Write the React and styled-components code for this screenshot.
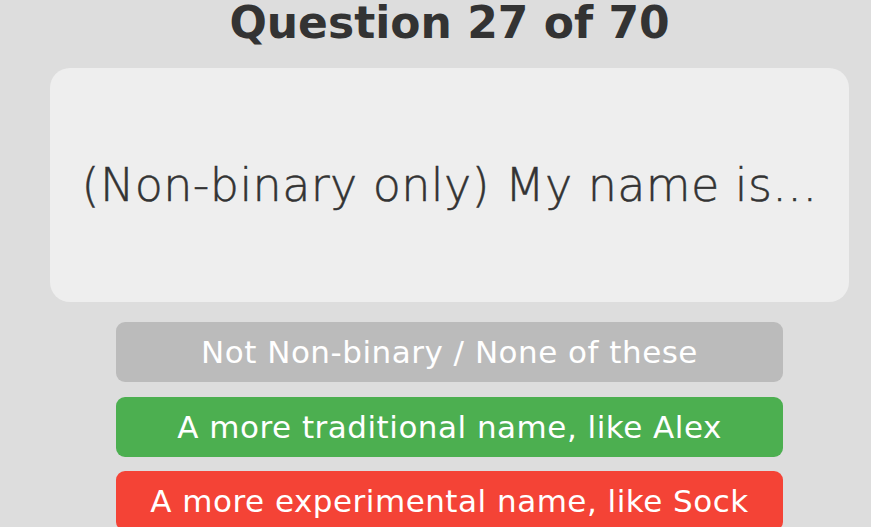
import React from 'react';
import styled, { createGlobalStyle } from 'styled-components';

const GlobalStyle = createGlobalStyle`
  html, body {
    margin: 0;
    padding: 0;
    background-color: #dddddd;
    font-family: "DejaVu Sans", Inter, sans-serif;
    overflow: hidden;
  }
`;

const Page = styled.div`
  width: 799px;
  margin-left: 50px;
  display: flex;
  flex-direction: column;
  align-items: center;
`;

const Title = styled.h1`
  margin: 0 0 14px;
  height: 54px;
  line-height: 46px;
  font-size: 44px;
  font-weight: 700;
  color: #333;
  text-align: center;
`;

const Card = styled.div`
  box-sizing: border-box;
  width: 100%;
  height: 234px;
  background-color: #eeeeee;
  border-radius: 20px;
  display: flex;
  align-items: center;
  justify-content: center;
  margin-bottom: 20px;
`;

const Prompt = styled.p`
  margin: 0;
  font-size: 46px;
  font-weight: 200;
  letter-spacing: 0.4px;
  color: #333;
  -webkit-text-stroke: 0.5px #333;
`;

const Answers = styled.div`
  width: 667px;
  display: flex;
  flex-direction: column;
  gap: 14.5px;
`;

const Answer = styled.button`
  height: 60px;
  border: none;
  border-radius: 9px;
  background-color: ${(p) => p.$color};
  color: #fff;
  font-family: inherit;
  font-size: 31px;
  font-weight: 400;
  letter-spacing: 0.5px;
  cursor: pointer;
`;

const answers = [
  { label: 'Not Non-binary / None of these', color: '#bbbbbb' },
  { label: 'A more traditional name, like Alex', color: '#4caf50' },
  { label: 'A more experimental name, like Sock', color: '#f44336' },
];

export default function App() {
  return (
    <>
      <GlobalStyle />
      <Page>
        <Title>Question 27 of 70</Title>
        <Card>
          <Prompt>(Non-binary only) My name is...</Prompt>
        </Card>
        <Answers>
          {answers.map((a) => (
            <Answer key={a.label} $color={a.color}>
              {a.label}
            </Answer>
          ))}
        </Answers>
      </Page>
    </>
  );
}
